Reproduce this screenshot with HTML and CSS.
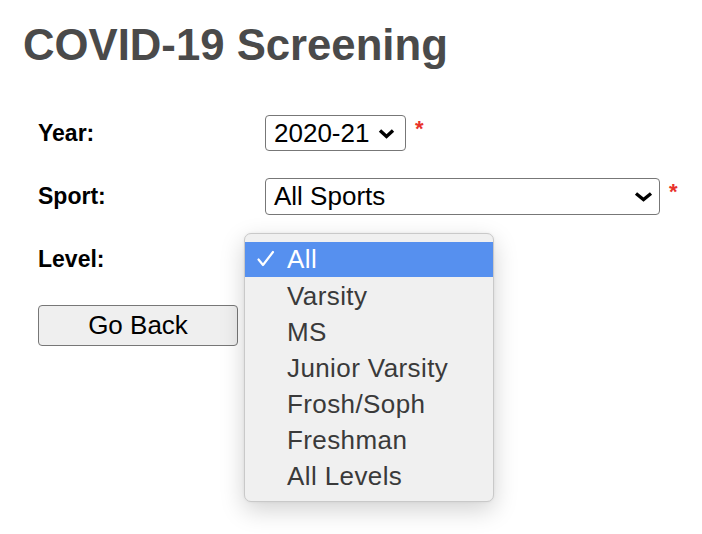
FILE: index.html
```html
<!DOCTYPE html>
<html>
<head>
<meta charset="utf-8">
<title>COVID-19 Screening</title>
<link rel="stylesheet" href="styles.css">
</head>
<body>
<div class="page">
  <h1 class="title">COVID-19 Screening</h1>
  <div class="form">
    <div class="label">Year:</div>
    <div class="field">
      <div class="select select-year"><span class="select-text">2020-21</span><svg class="chev" width="17" height="11" viewBox="0 0 17 11"><polyline points="2,2.5 8.5,8.5 15,2.5" fill="none" stroke="#000" stroke-width="3.4"/></svg></div>
      <span class="req">*</span>
    </div>
    <div class="label">Sport:</div>
    <div class="field">
      <div class="select select-sport"><span class="select-text">All Sports</span><svg class="chev" width="19" height="11" viewBox="0 0 19 11"><polyline points="2,2.5 9.5,8.5 17,2.5" fill="none" stroke="#000" stroke-width="3.4"/></svg></div>
      <span class="req">*</span>
    </div>
    <div class="label">Level:</div>
    <div class="field">
      <div class="level-wrap">
        <div class="select select-level"></div>
        <div class="menu">
          <div class="opt opt-sel"><svg class="check" width="18" height="18" viewBox="0 0 18 18"><polyline points="1.5,9.5 6,15 16,2" fill="none" stroke="#fff" stroke-width="2.2" stroke-linecap="round" stroke-linejoin="round"/></svg><span>All</span></div>
          <div class="opt"><span>Varsity</span></div>
          <div class="opt"><span>MS</span></div>
          <div class="opt"><span>Junior Varsity</span></div>
          <div class="opt"><span>Frosh/Soph</span></div>
          <div class="opt"><span>Freshman</span></div>
          <div class="opt"><span>All Levels</span></div>
        </div>
      </div>
    </div>
  </div>
  <div class="actions">
    <button class="btn">Go Back</button>
  </div>
</div>
</body>
</html>
```
FILE: styles.css
```css
html, body {
  margin: 0;
  padding: 0;
  background: #fff;
  min-height: 534px;
}
.page {
  font-family: "Liberation Sans", Arial, sans-serif;
  padding-top: 19px;
  min-height: 515px;
}
.title {
  margin: 0 0 44px 23px;
  font-size: 43.7px;
  line-height: 52px;
  font-weight: bold;
  color: #4a4a4a;
}
.form {
  display: grid;
  grid-template-columns: 227px auto;
  grid-auto-rows: 36px;
  row-gap: 27px;
  align-items: center;
  padding-left: 38px;
}
.label {
  font-size: 23px;
  font-weight: bold;
  color: #000;
}
.field {
  display: flex;
  align-items: flex-start;
  height: 36px;
}
.select {
  box-sizing: border-box;
  height: 36px;
  border: 1.5px solid #777;
  border-radius: 4px;
  background: #fff;
  display: flex;
  align-items: center;
  justify-content: space-between;
  padding: 0 10px 0 8px;
  font-size: 26px;
  color: #000;
}
.select-year { width: 141px; }
.select-sport { width: 395px; height: 37px; padding-right: 6px; }
.select-level { width: 90px; }
.chev { display: block; }
.req {
  color: #e8322b;
  font-weight: bold;
  font-size: 22px;
  line-height: 22px;
  margin-left: 9px;
  margin-top: 3px;
}
.level-wrap {
  position: relative;
}
.menu {
  position: absolute;
  z-index: 5;
  left: -21px;
  top: -8px;
  width: 250px;
  box-sizing: border-box;
  padding: 8px 0 7px;
  background: #f0f0f0;
  border: 1px solid #c9c9c9;
  border-radius: 7px;
  box-shadow: 0 8px 24px rgba(0, 0, 0, 0.18), 0 0 3px rgba(0, 0, 0, 0.06);
  font-family: "Liberation Sans", Arial, sans-serif;
  font-size: 26px;
  letter-spacing: 0.4px;
  color: #3a3a3a;
}
.opt {
  height: 36px;
  display: flex;
  align-items: center;
  padding-left: 42px;
  position: relative;
}
.opt-sel {
  background: #5690ef;
  color: #fff;
  height: 35px;
  margin-bottom: 1px;
}
.check {
  position: absolute;
  left: 12px;
  top: 8px;
}
.actions {
  padding-left: 38px;
  margin-top: 28px;
}
.btn {
  box-sizing: border-box;
  width: 200px;
  height: 41px;
  background: #efefef;
  border: 1.5px solid #777;
  border-radius: 4px;
  font-family: "Liberation Sans", Arial, sans-serif;
  font-size: 26px;
  color: #000;
  padding: 0;
}
```
